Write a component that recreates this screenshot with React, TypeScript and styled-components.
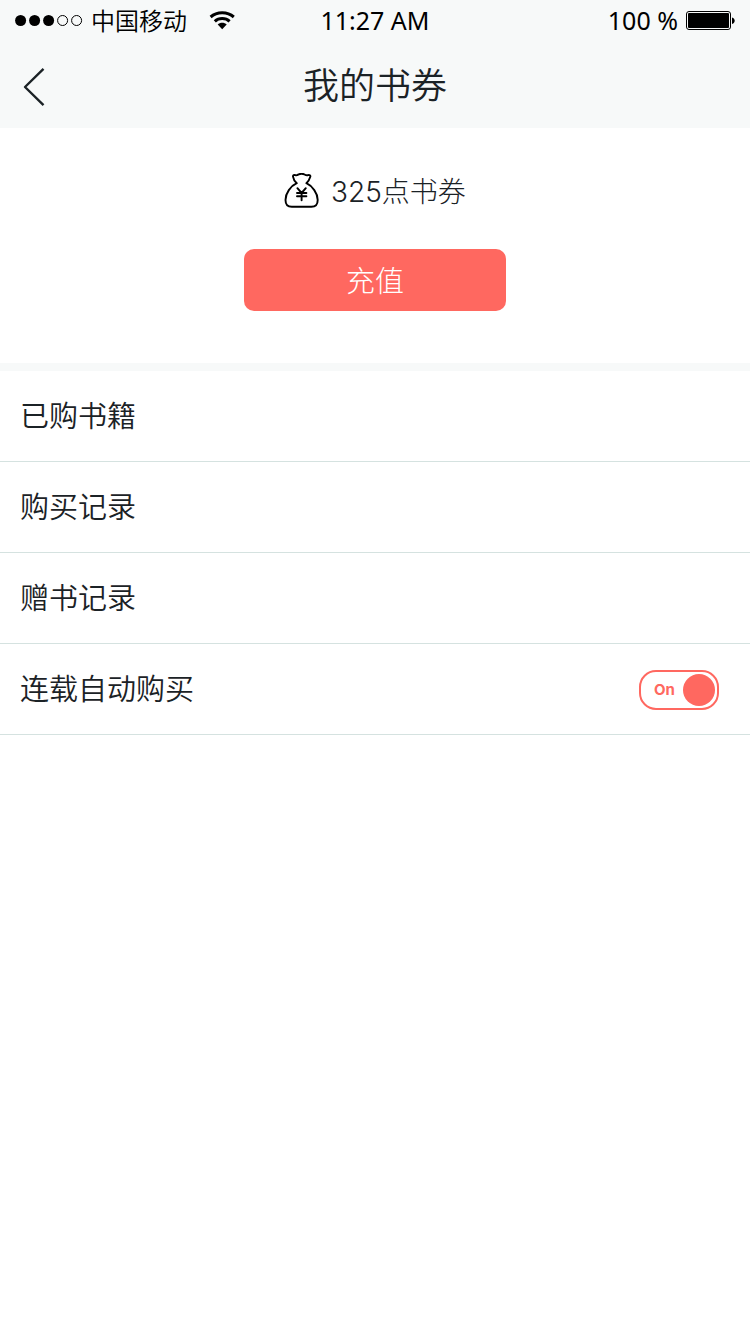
import React, { useState } from "react";
import styled, { createGlobalStyle } from "styled-components";

const ink = "#1b2226";
const coral = "#ff6860";
const mist = "#f7f9f9";
const line = "#d5e2e0";

const GlobalStyle = createGlobalStyle`
  *, *::before, *::after { box-sizing: border-box; }
  html, body { margin: 0; background: #fff; }
  body {
    color: ${ink};
    font-family: Inter, "Noto Sans CJK SC", sans-serif;
    font-weight: 350;
    -webkit-font-smoothing: antialiased;
  }
  button, input { font: inherit; color: inherit; }
`;

const Page = styled.div`
  min-height: 100vh;
  display: flex;
  flex-direction: column;
`;

const Top = styled.div`
  background: ${mist};
`;

const StatusBar = styled.div`
  display: grid;
  grid-template-columns: 1fr auto 1fr;
  align-items: center;
  height: 40px;
  padding: 0 15px;
  color: #000;
  font-size: 24px;
  line-height: 40px;
`;

const StatusGroup = styled.div<{ $end?: boolean }>`
  display: flex;
  align-items: center;
  justify-content: ${(p) => (p.$end ? "flex-end" : "flex-start")};
  gap: 8px;
`;

const Carrier = styled.span`
  margin-right: 14px;
  padding-top: 4px;
  line-height: 36px;
`;

const StatusText = styled.span`
  font-family: "Noto Sans", sans-serif;
  font-size: 25px;
  font-weight: 400;
`;

const NavBar = styled.header`
  display: grid;
  grid-template-columns: 72px 1fr 72px;
  align-items: center;
  height: 88px;
`;

const BackButton = styled.button`
  display: flex;
  align-items: center;
  height: 88px;
  padding: 6px 0 0 23px;
  border: 0;
  background: none;
  cursor: pointer;
`;

const Title = styled.h1`
  margin: 0;
  padding-top: 4px;
  font-size: 36px;
  line-height: 84px;
  font-weight: 350;
  text-align: center;
`;

const Wallet = styled.section`
  display: flex;
  flex-direction: column;
  align-items: center;
  gap: 36px;
  padding: 42px 20px 52px;
  border-bottom: 8px solid ${mist};
`;

const Balance = styled.p`
  display: flex;
  align-items: center;
  gap: 12px;
  height: 43px;
  padding-bottom: 2px;
  margin: 0;
  font-size: 28px;
  line-height: 34px;
`;

const BalanceText = styled.span`
  padding-top: 2px;
  font-weight: 300;
`;

const RechargeButton = styled.button`
  width: 262px;
  height: 62px;
  padding: 4px 0 0;
  border: 0;
  border-radius: 10px;
  background: ${coral};
  color: #fff;
  font-size: 29px;
  line-height: 58px;
  font-weight: 300;
  cursor: pointer;
`;

const Menu = styled.ul`
  margin: 0;
  padding: 0;
  list-style: none;
`;

const MenuItem = styled.li`
  display: flex;
  align-items: center;
  justify-content: space-between;
  padding-top: 2px;
  border-bottom: 1px solid ${line};
  font-size: 29px;
  line-height: 88px;
`;

const MenuLink = styled.a`
  flex: 1;
  padding: 0 20px;
  color: inherit;
  text-decoration: none;
`;

const MenuLabel = styled.label`
  flex: 1;
  padding-left: 20px;
`;

const Toggle = styled.span<{ $on: boolean }>`
  position: relative;
  display: flex;
  flex-direction: ${(p) => (p.$on ? "row" : "row-reverse")};
  align-items: center;
  justify-content: space-between;
  width: 80px;
  height: 40px;
  margin-right: 31px;
  padding: 0 2px;
  border: 2px solid ${coral};
  border-radius: 17px;
  color: ${coral};
  font-size: 15px;
  line-height: 20px;
  font-weight: 700;
`;

const ToggleText = styled.span`
  flex: 1;
  padding-left: 3px;
  text-align: center;
`;

const Knob = styled.span`
  flex: none;
  width: 32px;
  height: 32px;
  border-radius: 50%;
  background: ${coral};
`;

const ToggleInput = styled.input`
  position: absolute;
  inset: 0;
  width: 100%;
  height: 100%;
  margin: 0;
  opacity: 0;
  cursor: pointer;
`;

const SignalIcon = () => (
  <svg width="68" height="12" viewBox="0 0 68 12" aria-hidden="true">
    {[0, 1, 2, 3, 4].map((i) =>
      i < 3 ? (
        <circle key={i} cx={5.6 + i * 14} cy="6.5" r="5.5" fill="#000" />
      ) : (
        <circle key={i} cx={5.6 + i * 14} cy="6.5" r="5" fill="none" stroke="#000" />
      )
    )}
  </svg>
);

const WifiIcon = () => (
  <svg width="26" height="19" viewBox="0 0 26 19" aria-hidden="true">
    <g fill="none" stroke="#000" strokeWidth="3">
      <path d="M1.6 6C8 .4 18.4 .4 24.8 6" />
      <path d="M5.8 10.4C9.8 6.6 16.6 6.6 20.6 10.4" />
    </g>
    <path d="M8.7 13.6C11 11.2 15.4 11.2 17.7 13.6L13.2 18.2Z" fill="#000" />
  </svg>
);

const BatteryIcon = () => (
  <svg width="49" height="20" viewBox="0 0 49 20" aria-hidden="true">
    <rect x="0.5" y="1.5" width="44" height="18" rx="2.5" fill="none" stroke="#000" />
    <rect x="2" y="3" width="41" height="15" rx="1" fill="#000" />
    <path d="M46 7.4C49.6 8 49.6 13.4 46 14Z" fill="#000" />
  </svg>
);

const BackIcon = () => (
  <svg width="22" height="40" viewBox="0 0 22 40" aria-hidden="true">
    <path d="M20.5 1.8L2 20L20.5 38.2" fill="none" stroke={ink} strokeWidth="2.4" strokeLinecap="butt" strokeLinejoin="round" />
  </svg>
);

const MoneyBagIcon = () => (
  <svg width="35" height="35" viewBox="0 0 35 35" aria-hidden="true">
    <g fill="none" stroke="#000" strokeWidth="1.9" strokeLinecap="round" strokeLinejoin="round">
      <path d="M12.8 10.2C10.8 8.6 9.4 6.2 9 3.6C8.8 2.2 10.2 1.7 11.4 2.2C12.6 2.7 13.6 2.1 14.7 1.4C16.2 .7 19 .7 20.5 1.5C21.7 2.2 22.6 2.6 24.1 2.1C25.5 1.7 26.7 2.4 26.3 3.8C25.5 6.5 24 8.9 22.4 10.2C28.4 13 33.7 20.2 33.7 26.9C33.7 31.5 31.6 33.7 27.4 33.7H7.8C3.6 33.7 1.5 31.5 1.5 26.9C1.5 20.2 6.6 13 12.8 10.2Z" />
      <path d="M13.4 15.2L17.6 20L21.8 15.2M13 20H22.4M13 23.3H22.4M17.6 20V27.2" />
    </g>
  </svg>
);

const links = ["已购书籍", "购买记录", "赠书记录"];

export default function App() {
  const [autoBuy, setAutoBuy] = useState(true);

  return (
    <Page>
      <GlobalStyle />
      <Top>
        <StatusBar>
          <StatusGroup>
            <SignalIcon />
            <Carrier>中国移动</Carrier>
            <WifiIcon />
          </StatusGroup>
          <StatusText>11:27 AM</StatusText>
          <StatusGroup $end>
            <StatusText>100 %</StatusText>
            <BatteryIcon />
          </StatusGroup>
        </StatusBar>
        <NavBar>
          <BackButton type="button" aria-label="返回">
            <BackIcon />
          </BackButton>
          <Title>我的书券</Title>
        </NavBar>
      </Top>
      <main>
        <Wallet>
          <Balance>
            <MoneyBagIcon />
            <BalanceText>325点书券</BalanceText>
          </Balance>
          <RechargeButton type="button">充值</RechargeButton>
        </Wallet>
        <Menu>
          {links.map((text) => (
            <MenuItem key={text}>
              <MenuLink href="#">{text}</MenuLink>
            </MenuItem>
          ))}
          <MenuItem>
            <MenuLabel htmlFor="auto-buy">连载自动购买</MenuLabel>
            <Toggle $on={autoBuy}>
              <ToggleText>{autoBuy ? "On" : "Off"}</ToggleText>
              <Knob />
              <ToggleInput
                id="auto-buy"
                type="checkbox"
                role="switch"
                checked={autoBuy}
                onChange={(e) => setAutoBuy(e.target.checked)}
              />
            </Toggle>
          </MenuItem>
        </Menu>
      </main>
    </Page>
  );
}
